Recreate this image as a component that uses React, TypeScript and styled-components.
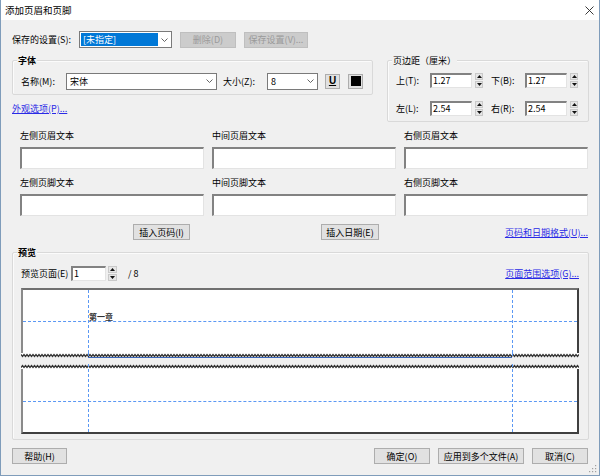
import styled, { createGlobalStyle } from "styled-components";

const GlobalStyle = createGlobalStyle`
  html, body {
    margin: 0;
    padding: 0;
    background: #f0f0f0;
  }
  body {
    font-family: "Noto Sans CJK SC", "Noto Sans", sans-serif;
    font-size: 9px;
    color: #000;
  }
  * {
    box-sizing: border-box;
  }
`;

const PAGE_W = 558;
const GUIDE = "#5b98f4";

const Window = styled.div`
  position: relative;
  width: 600px;
  height: 476px;
  background: #f0f0f0;
  border: 1px solid #7f9cba;
  border-top: none;
  display: flex;
  flex-direction: column;
  overflow: hidden;
`;

const TitleBar = styled.div`
  height: 20px;
  background: #fff;
  display: flex;
  align-items: center;
  justify-content: space-between;
  padding: 0 5px 0 4px;
  font-size: 9.5px;
  line-height: 12px;
`;

const Body = styled.div`
  display: flex;
  flex-direction: column;
  padding: 0 10px 0 11px;
`;

const Row = styled.div<{ $mt?: number; $h?: number }>`
  display: flex;
  align-items: center;
  margin-top: ${(p) => p.$mt ?? 0}px;
  height: ${(p) => (p.$h ? `${p.$h}px` : "auto")};
`;

const FieldLabel = styled.span<{ $w: number; $ml?: number }>`
  width: ${(p) => p.$w}px;
  margin-left: ${(p) => p.$ml ?? 0}px;
  flex-shrink: 0;
  line-height: 11px;
  white-space: nowrap;
`;

const Combo = styled.div<{ $w: number }>`
  width: ${(p) => p.$w}px;
  height: 17px;
  background: #fff;
  border: 1px solid #7a7a7a;
  display: flex;
  align-items: center;
  padding: 1px 0 1px 1px;
  flex-shrink: 0;
`;

const ComboValue = styled.span<{ $selected?: boolean }>`
  flex: 1;
  height: 100%;
  display: flex;
  align-items: center;
  padding-left: 2px;
  line-height: 11px;
  background: ${(p) => (p.$selected ? "#0078d7" : "transparent")};
  color: ${(p) => (p.$selected ? "#fff" : "#000")};
`;

const ComboArrow = styled.span`
  width: 13px;
  display: flex;
  align-items: center;
  justify-content: center;
  flex-shrink: 0;
`;

const PushButton = styled.button<{ $w: number; $ml?: number; $disabled?: boolean }>`
  width: ${(p) => p.$w}px;
  height: 16px;
  margin: 0 0 0 ${(p) => p.$ml ?? 0}px;
  padding: 0;
  flex-shrink: 0;
  font-family: inherit;
  font-size: 9px;
  line-height: 11px;
  white-space: nowrap;
  background: ${(p) => (p.$disabled ? "#cccccc" : "#e1e1e1")};
  border: 1px solid ${(p) => (p.$disabled ? "#bfbfbf" : "#adadad")};
  color: ${(p) => (p.$disabled ? "#9a9a9a" : "#000")};
`;

const GroupBox = styled.div<{ $w: number; $h: number; $ml?: number }>`
  position: relative;
  width: ${(p) => p.$w}px;
  height: ${(p) => p.$h}px;
  margin-left: ${(p) => p.$ml ?? 0}px;
  flex-shrink: 0;
  border: 1px solid #d9d9d9;
  border-radius: 2px;
  box-shadow: inset 1px 1px 0 #fbfbfb;
`;

const GroupTitle = styled.span<{ $bold?: boolean }>`
  position: absolute;
  top: -6px;
  left: 4px;
  padding: 0 1px;
  background: #f0f0f0;
  line-height: 11px;
  font-weight: ${(p) => (p.$bold ? 700 : 400)};
  white-space: nowrap;
`;

const GroupInner = styled.div<{ $pt: number; $pl: number; $pr?: number; $gap?: number }>`
  display: flex;
  flex-direction: column;
  gap: ${(p) => p.$gap ?? 0}px;
  padding: ${(p) => p.$pt}px ${(p) => p.$pr ?? 0}px 0 ${(p) => p.$pl}px;
`;

const TopSection = styled.div`
  display: flex;
  align-items: flex-start;
  margin-top: 12px;
`;

const Column = styled.div`
  display: flex;
  flex-direction: column;
`;

const LinkText = styled.a<{ $mt?: number; $ml?: string }>`
  margin-top: ${(p) => p.$mt ?? 0}px;
  margin-left: ${(p) => p.$ml ?? "0"};
  color: #2a2ae6;
  text-decoration: underline;
  line-height: 11px;
  white-space: nowrap;
  cursor: pointer;
`;

const StyleButton = styled.div<{ $ml: number }>`
  width: 15px;
  height: 15px;
  margin-left: ${(p) => p.$ml}px;
  flex-shrink: 0;
  background: #e1e1e1;
  border: 1px solid #adadad;
  display: flex;
  align-items: center;
  justify-content: center;
  font-family: "Liberation Sans", sans-serif;
  font-weight: 700;
  font-size: 10px;
  line-height: 10px;
  text-decoration: underline;
`;

const ColorSwatch = styled.span`
  width: 10px;
  height: 10px;
  background: #000;
`;

const TextBox = styled.div<{ $w?: number; $h: number }>`
  width: ${(p) => (p.$w ? `${p.$w}px` : "100%")};
  height: ${(p) => p.$h}px;
  flex-shrink: 0;
  background: #fff;
  border-style: solid;
  border-width: 2px 1px 1px 2px;
  border-color: #828282 #e3e3e3 #e3e3e3 #828282;
  padding-left: 1px;
  font-size: 9px;
  line-height: ${(p) => p.$h - 4}px;
`;

const Spinner = styled.div<{ $w: number; $ml: number }>`
  width: ${(p) => p.$w}px;
  height: 15px;
  margin-left: ${(p) => p.$ml}px;
  flex-shrink: 0;
  display: flex;
  flex-direction: column;
  gap: 1px;
`;

const SpinHalf = styled.div`
  flex: 1;
  background: #e6e6e6;
  border: 1px solid #c9c9c9;
  display: flex;
  align-items: center;
  justify-content: center;
`;

const TextGrid = styled.div<{ $mt: number }>`
  display: grid;
  grid-template-columns: repeat(3, 184px);
  column-gap: 8px;
  row-gap: 8px;
  align-items: center;
  margin-top: ${(p) => p.$mt}px;
  padding-left: 8px;
`;

const FieldCell = styled.div`
  display: flex;
  flex-direction: column;
  gap: 6px;
`;

const CellSlot = styled.div<{ $indent?: number; $end?: boolean }>`
  display: flex;
  justify-content: ${(p) => (p.$end ? "flex-end" : "flex-start")};
  padding-left: ${(p) => p.$indent ?? 0}px;
`;

const Pages = styled.div`
  display: flex;
  flex-direction: column;
  margin-top: 7px;
`;

const PageBody = styled.div<{ $top?: boolean }>`
  position: relative;
  width: ${PAGE_W}px;
  height: 65px;
  background: #fff;
  border-style: solid;
  border-color: #707070 #3f3f3f #3f3f3f #8a8a8a;
  border-width: ${(p) => (p.$top ? "2px 2px 0 2px" : "0 2px 2px 2px")};
`;

const GuideH = styled.div<{ $top: number }>`
  position: absolute;
  left: 0;
  right: 0;
  top: ${(p) => p.$top}px;
  height: 0;
  border-top: 1px dashed ${GUIDE};
`;

const GuideV = styled.div<{ $left: number }>`
  position: absolute;
  top: 0;
  bottom: 0;
  left: ${(p) => p.$left}px;
  width: 0;
  border-left: 1px dashed ${GUIDE};
`;

const HeaderSample = styled.span`
  position: absolute;
  left: 66px;
  top: 22px;
  font-size: 8px;
  line-height: 9px;
  font-weight: 700;
  color: #333;
`;

const Edge = styled.svg<{ $mt?: number }>`
  display: block;
  margin-top: ${(p) => p.$mt ?? 0}px;
`;

const BottomBar = styled.div`
  display: flex;
  align-items: center;
  margin-top: 8px;
`;

const ButtonGroup = styled.div`
  display: flex;
  gap: 8px;
  margin-left: auto;
  margin-right: 1px;
`;

const Grip = styled.svg`
  position: absolute;
  right: 2px;
  bottom: 2px;
`;

const Chevron = () => (
  <svg width="7" height="4" viewBox="0 0 7 4">
    <path d="M0.5 0.5 L3.5 3.5 L6.5 0.5" fill="none" stroke="#555" strokeWidth="0.9" />
  </svg>
);

const Tri = ({ up }: { up?: boolean }) => (
  <svg width="5" height="3" viewBox="0 0 5 3">
    <path d={up ? "M0 3 L2.5 0 L5 3 Z" : "M0 0 L2.5 3 L5 0 Z"} fill="#111" />
  </svg>
);

const SpinBox = ({ w, ml }: { w: number; ml: number }) => (
  <Spinner $w={w} $ml={ml}>
    <SpinHalf>
      <Tri up />
    </SpinHalf>
    <SpinHalf>
      <Tri />
    </SpinHalf>
  </Spinner>
);

const zigPoints = (yA: number, yB: number) => {
  const pts: string[] = [];
  for (let x = 0; x <= PAGE_W; x += 3) {
    pts.push(`${x},${yA}`);
    if (x + 1.5 <= PAGE_W) pts.push(`${x + 1.5},${yB}`);
  }
  return pts;
};

const TornEdge = ({ bottom }: { bottom?: boolean }) => {
  const pts = bottom ? zigPoints(1.5, 3.5) : zigPoints(3.5, 1.5);
  const fill = bottom
    ? `0,0 ${pts.join(" ")} ${PAGE_W},0`
    : `0,5 ${pts.join(" ")} ${PAGE_W},5`;
  return (
    <Edge width={PAGE_W} height={5} $mt={bottom ? 0 : 6}>
      <polygon points={fill} fill="#fff" />
      <polyline points={pts.join(" ")} fill="none" stroke="#333" strokeWidth="1.3" />
      {bottom && <line x1="67" y1="4.5" x2="491" y2="4.5" stroke="#3a66b8" strokeWidth="1" />}
      <line x1="67.5" y1="0" x2="67.5" y2="5" stroke={GUIDE} strokeDasharray="3 2" />
      <line x1="491.5" y1="0" x2="491.5" y2="5" stroke={GUIDE} strokeDasharray="3 2" />
    </Edge>
  );
};

const headerFields = ["左侧页眉文本", "中间页眉文本", "右侧页眉文本", "左侧页脚文本", "中间页脚文本", "右侧页脚文本"];

const App = () => {
  return (
    <>
      <GlobalStyle />
      <Window>
        <TitleBar>
          <span>添加页眉和页脚</span>
          <svg width="9" height="9" viewBox="0 0 9 9">
            <path d="M0.5 0.5 L8.5 8.5 M8.5 0.5 L0.5 8.5" stroke="#222" strokeWidth="0.9" />
          </svg>
        </TitleBar>
        <Body>
          <Row $mt={11} $h={17}>
            <FieldLabel $w={67}>保存的设置(S):</FieldLabel>
            <Combo $w={93}>
              <ComboValue $selected>[未指定]</ComboValue>
              <ComboArrow>
                <Chevron />
              </ComboArrow>
            </Combo>
            <PushButton $w={56} $ml={8} $disabled>
              删除(D)
            </PushButton>
            <PushButton $w={64} $ml={8} $disabled>
              保存设置(V)...
            </PushButton>
          </Row>

          <TopSection>
            <Column>
              <GroupBox $w={361} $h={35}>
                <GroupTitle $bold>字体</GroupTitle>
                <GroupInner $pt={12} $pl={8}>
                  <Row $h={16}>
                    <FieldLabel $w={45}>名称(M):</FieldLabel>
                    <Combo $w={151}>
                      <ComboValue>宋体</ComboValue>
                      <ComboArrow>
                        <Chevron />
                      </ComboArrow>
                    </Combo>
                    <FieldLabel $w={44} $ml={6}>
                      大小(Z):
                    </FieldLabel>
                    <Combo $w={51}>
                      <ComboValue>8</ComboValue>
                      <ComboArrow>
                        <Chevron />
                      </ComboArrow>
                    </Combo>
                    <StyleButton $ml={7}>U</StyleButton>
                    <StyleButton $ml={8}>
                      <ColorSwatch />
                    </StyleButton>
                  </Row>
                </GroupInner>
              </GroupBox>
              <LinkText $mt={8}>外观选项(P)...</LinkText>
            </Column>

            <GroupBox $w={202} $h={62} $ml={14}>
              <GroupTitle>页边距（厘米）</GroupTitle>
              <GroupInner $pt={12} $pl={8} $gap={13}>
                <Row $h={15}>
                  <FieldLabel $w={34}>上(T):</FieldLabel>
                  <TextBox $w={42} $h={15}>1.27</TextBox>
                  <SpinBox w={8} ml={3} />
                  <FieldLabel $w={34} $ml={8}>
                    下(B):
                  </FieldLabel>
                  <TextBox $w={42} $h={15}>1.27</TextBox>
                  <SpinBox w={8} ml={3} />
                </Row>
                <Row $h={15}>
                  <FieldLabel $w={34}>左(L):</FieldLabel>
                  <TextBox $w={42} $h={15}>2.54</TextBox>
                  <SpinBox w={8} ml={3} />
                  <FieldLabel $w={34} $ml={8}>
                    右(R):
                  </FieldLabel>
                  <TextBox $w={42} $h={15}>2.54</TextBox>
                  <SpinBox w={8} ml={3} />
                </Row>
              </GroupInner>
            </GroupBox>
          </TopSection>

          <TextGrid $mt={8}>
            {headerFields.map((label) => (
              <FieldCell key={label}>
                <FieldLabel $w={184}>{label}</FieldLabel>
                <TextBox $h={22} />
              </FieldCell>
            ))}
          </TextGrid>

          <TextGrid $mt={8}>
            <CellSlot $indent={113}>
              <PushButton $w={57}>插入页码(I)</PushButton>
            </CellSlot>
            <CellSlot $indent={109}>
              <PushButton $w={58}>插入日期(E)</PushButton>
            </CellSlot>
            <CellSlot $end>
              <LinkText>页码和日期格式(U)...</LinkText>
            </CellSlot>
          </TextGrid>

          <Row $mt={12}>
            <GroupBox $w={577} $h={188}>
              <GroupTitle $bold>预览</GroupTitle>
              <GroupInner $pt={13} $pl={8} $pr={9}>
                <Row $h={15}>
                  <FieldLabel $w={50}>预览页面(E)</FieldLabel>
                  <TextBox $w={35} $h={15}>1</TextBox>
                  <SpinBox w={9} ml={2} />
                  <FieldLabel $w={20} $ml={11}>
                    / 8
                  </FieldLabel>
                  <LinkText $ml="auto">页面范围选项(G)...</LinkText>
                </Row>
                <Pages>
                  <PageBody $top>
                    <GuideH $top={31} />
                    <GuideV $left={65} />
                    <GuideV $left={489} />
                    <HeaderSample>第一章</HeaderSample>
                  </PageBody>
                  <TornEdge bottom />
                  <TornEdge />
                  <PageBody>
                    <GuideH $top={32} />
                    <GuideV $left={65} />
                    <GuideV $left={489} />
                  </PageBody>
                </Pages>
              </GroupInner>
            </GroupBox>
          </Row>

          <BottomBar>
            <PushButton $w={55}>帮助(H)</PushButton>
            <ButtonGroup>
              <PushButton $w={56}>确定(O)</PushButton>
              <PushButton $w={86}>应用到多个文件(A)</PushButton>
              <PushButton $w={56}>取消(C)</PushButton>
            </ButtonGroup>
          </BottomBar>
        </Body>
        <Grip width="8" height="8" viewBox="0 0 8 8">
          <rect x="6" y="0" width="1.2" height="1.2" fill="#a0a0a0" />
          <rect x="3" y="3" width="1.2" height="1.2" fill="#a0a0a0" />
          <rect x="6" y="3" width="1.2" height="1.2" fill="#a0a0a0" />
          <rect x="0" y="6" width="1.2" height="1.2" fill="#a0a0a0" />
          <rect x="3" y="6" width="1.2" height="1.2" fill="#a0a0a0" />
          <rect x="6" y="6" width="1.2" height="1.2" fill="#a0a0a0" />
        </Grip>
      </Window>
    </>
  );
};

export default App;
